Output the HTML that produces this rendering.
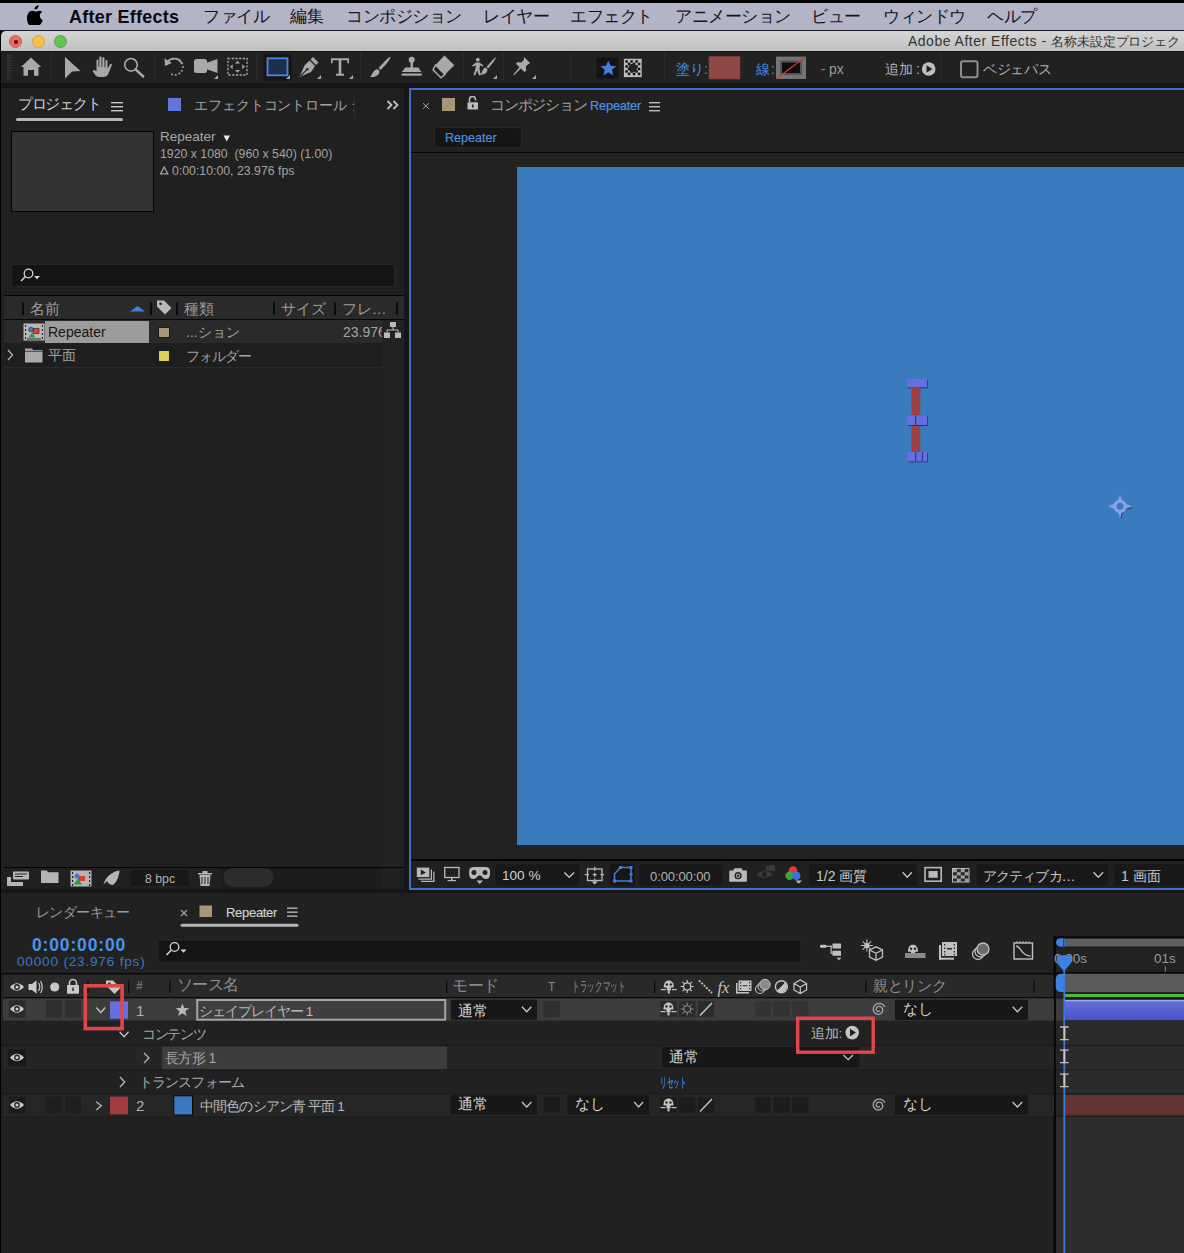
<!DOCTYPE html>
<html lang="ja"><head><meta charset="utf-8">
<style>
*{box-sizing:border-box;margin:0;padding:0}
html,body{width:1184px;height:1253px;overflow:hidden;background:#161616;font-family:"Liberation Sans",sans-serif;}
.a{position:absolute}
.t{position:absolute;white-space:nowrap;line-height:1}
#menubar{left:0;top:3px;width:1184px;height:27px;background:#b4b4c7;}
#titlebar{left:1px;top:31px;width:1183px;height:20px;background:linear-gradient(#d6d6d6,#c0c0c0);border-radius:5px 0 0 0}
#toolbar{left:1px;top:51px;width:1183px;height:32px;background:linear-gradient(#141414 0,#141414 1.2px,#212121 1.2px)}
.mi{top:5px;font-size:17px;letter-spacing:-0.5px;color:#15151f}
.panel{background:#202020}
</style></head><body>
<div class="a" style="left:0;top:0;width:1184px;height:3px;background:#000"></div>
<div class="a" style="left:0;top:0;width:1px;height:1253px;background:#000"></div>
<div id="menubar" class="a">
<svg class="a" style="left:27px;top:2px" width="17" height="20" viewBox="0 0 17 20"><path d="M11.6 0.2c.1 1.2-.4 2.3-1.1 3.1-.7.8-1.8 1.4-2.9 1.3-.1-1.1.4-2.300 1.1-3 .7-.8 1.9-1.400 2.900-1.400zM15.4 6.8c-1.600.9-2.700 2.400-2.600 4.300.1 2.200 1.500 3.400 2.900 4.100-.4 1.200-.9 2.200-1.600 3.200-.900 1.300-1.900 2.500-3.300 2.500-1.300 0-1.800-.8-3.300-.8-1.600 0-2.100.8-3.300.8-1.400 0-2.400-1.300-3.300-2.600C-.1 15.700-.700 10.900 1.400 8c1-1.400 2.600-2.200 4.100-2.200 1.400 0 2.300.8 3.400.8 1.100 0 1.800-.8 3.400-.8 1.300 0 2.700.700 3.500 1.800z" fill="#000"/></svg>
<span class="t" style="left:69px;top:5px;font-size:18px;letter-spacing:0.25px;font-weight:bold;color:#0a0a14">After Effects</span>
<span class="t mi" style="left:203px">ファイル</span>
<span class="t mi" style="left:290px">編集</span>
<span class="t mi" style="left:346px">コンポジション</span>
<span class="t mi" style="left:483px">レイヤー</span>
<span class="t mi" style="left:570px">エフェクト</span>
<span class="t mi" style="left:675px">アニメーション</span>
<span class="t mi" style="left:811px">ビュー</span>
<span class="t mi" style="left:883px">ウィンドウ</span>
<span class="t mi" style="left:987px">ヘルプ</span>
</div>
<div class="a" style="left:0;top:30px;width:1184px;height:1px;background:#1a1a22"></div>
<div id="titlebar" class="a">
<div class="a" style="left:8px;top:4px;width:13px;height:13px;border-radius:50%;background:#ee6a5e;border:0.5px solid #d5574c"><div class="a" style="left:4px;top:4px;width:4px;height:4px;border-radius:50%;background:#4a0c08"></div></div>
<div class="a" style="left:31px;top:4px;width:13px;height:13px;border-radius:50%;background:#f5bf4f;border:0.5px solid #d9a23c"></div>
<div class="a" style="left:53px;top:4px;width:13px;height:13px;border-radius:50%;background:#61c554;border:0.5px solid #4ea843"></div>
<span class="t" style="left:907px;top:3px;font-size:14px;letter-spacing:0.5px;color:#333">Adobe After Effects -</span><span class="t" style="left:1050px;top:4px;font-size:13.3px;letter-spacing:-0.1px;color:#333">名称未設定プロジェクト</span>
</div>
<div id="toolbar" class="a">
<svg class="a" style="left:0;top:0" width="1183" height="32" viewBox="1 51 1183 32">
<g fill="#3a3a3a"><rect x="7" y="55.0" width="4" height="1.2"/><rect x="7" y="57.5" width="4" height="1.2"/><rect x="7" y="60.0" width="4" height="1.2"/><rect x="7" y="62.5" width="4" height="1.2"/><rect x="7" y="65.0" width="4" height="1.2"/><rect x="7" y="67.5" width="4" height="1.2"/><rect x="7" y="70.0" width="4" height="1.2"/><rect x="7" y="72.5" width="4" height="1.2"/><rect x="7" y="75.0" width="4" height="1.2"/><rect x="7" y="77.5" width="4" height="1.2"/></g>
<g fill="#2c2c2c"><rect x="51" y="53" width="1" height="28"/><rect x="154" y="53" width="1" height="28"/><rect x="256" y="53" width="1" height="28"/><rect x="360" y="53" width="1" height="28"/><rect x="463" y="53" width="1" height="28"/><rect x="503" y="53" width="1" height="28"/><rect x="570" y="53" width="1" height="28"/><rect x="664" y="53" width="1" height="28"/><rect x="940" y="53" width="1" height="28"/></g>
<!-- home -->
<path d="M31 57.5 L41.2 67 L38.5 67 L38.5 75.7 L34 75.7 L34 70 L28 70 L28 75.7 L23.5 75.7 L23.5 67 L21 67 Z" fill="#a9a9a9"/>
<!-- arrow -->
<path d="M65 57 L80.5 71 L72 71.5 L65 78.5 Z" fill="#a9a9a9"/>
<!-- hand -->
<path d="M99.5 77 C96 77 94.5 74 93 71.5 L92.7 70.5 C93.5 69.5 95 70 96 71 L96.5 71.5 L96.5 60.5 C96.5 59 98.5 59 98.5 60.5 L98.5 67 L99.3 67 L99.3 57.5 C99.3 56 101.5 56 101.5 57.5 L101.5 67 L102.3 67 L102.3 58.2 C102.3 56.8 104.5 56.8 104.5 58.2 L104.5 67.5 L105.3 67.5 L105.5 61 C105.5 59.6 107.5 59.6 107.5 61 L107.5 69 L109.8 64.5 C110.5 63.3 112.2 63.6 111.8 65 L108.5 73.5 C107.5 76 105.5 77 103.5 77 Z" fill="#a9a9a9"/>
<!-- zoom -->
<circle cx="131" cy="64.8" r="6.3" fill="none" stroke="#a9a9a9" stroke-width="1.6"/>
<path d="M135.5 69.3 L143.3 76.5" stroke="#a9a9a9" stroke-width="2.4" stroke-linecap="round"/>
<!-- rotate -->
<path d="M166.8 64.5 A8.2 8.2 0 1 1 170 73.5" fill="none" stroke="#a9a9a9" stroke-width="1.8" stroke-dasharray="1.6 2.2"/>
<path d="M166.5 64 A8.2 8.2 0 0 1 181.5 63" fill="none" stroke="#a9a9a9" stroke-width="1.8"/>
<path d="M164.5 58.2 L165 66 L171.8 63 Z" fill="#a9a9a9"/>
<!-- camera -->
<rect x="194" y="59" width="13" height="14" rx="2.5" fill="#a9a9a9"/>
<path d="M206 63 L217.5 59 L217.5 73 L206 69 Z" fill="#a9a9a9"/>
<path d="M218 75 L218 79 L214 79 Z" fill="#a9a9a9"/>
<!-- pan behind -->
<rect x="228" y="58.5" width="19" height="16.5" fill="none" stroke="#a9a9a9" stroke-width="1.3" stroke-dasharray="2.2 1.5"/>
<path d="M237.5 60.8 L240 63.5 L235 63.5 Z M237.5 72.8 L240 70 L235 70 Z M230 66.8 L232.7 64.3 L232.7 69.3 Z M245 66.8 L242.3 64.3 L242.3 69.3 Z" fill="#a9a9a9"/>
<!-- rect tool selected -->
<rect x="263.5" y="54" width="28" height="26.5" rx="2.5" fill="#151515"/>
<rect x="267.5" y="58.3" width="20" height="17" fill="#1c2f4f" stroke="#4d86e0" stroke-width="1.8"/>
<path d="M290 75 L290 79 L286 79 Z" fill="#a9a9a9"/>
<!-- pen -->
<path d="M313 57 L318.5 62.5 L316 65 L310.5 59.5 Z" fill="#a9a9a9"/>
<path d="M309.5 60.5 L315 66 L311 72 L299.5 77 L304.5 65.5 Z" fill="#a9a9a9"/>
<path d="M300.5 76 L306.5 70 " stroke="#232323" stroke-width="1.1"/>
<circle cx="307.3" cy="69.2" r="1.3" fill="#232323"/>
<path d="M321 75 L321 79 L317 79 Z" fill="#a9a9a9"/>
<!-- T -->
<path d="M331 58.3 L349 58.3 L349 63.3 L347.3 63.3 L347.3 60.3 L341.3 60.3 L341.3 73.7 L344 73.7 L344 75.7 L336 75.7 L336 73.7 L338.7 73.7 L338.7 60.3 L332.7 60.3 L332.7 63.3 L331 63.3 Z" fill="#a9a9a9"/>
<path d="M353 75 L353 79 L349 79 Z" fill="#a9a9a9"/>
<!-- brush -->
<path d="M390.5 56.8 C390.5 59 386 65 380.5 70 L378.5 68 C383.5 62.5 389 56.8 390.5 56.8 Z" fill="#a9a9a9"/>
<path d="M377.5 69 L379.5 71 C379.5 75.5 375 77.5 370 77 C372.5 75.5 372 70.5 377.5 69 Z" fill="#a9a9a9"/>
<!-- stamp -->
<circle cx="411.7" cy="59.7" r="3" fill="#a9a9a9"/>
<rect x="410.5" y="61" width="2.4" height="7" fill="#a9a9a9"/>
<path d="M404 69.5 C404 68 405 67.5 407 67.5 L416.5 67.5 C418.5 67.5 419.5 68 419.5 69.5 L421.7 72 L401.6 72 Z" fill="#a9a9a9"/>
<rect x="401.6" y="73.5" width="20.1" height="2.2" fill="#a9a9a9"/>
<!-- eraser -->
<path d="M444.5 55.5 L454.3 65.3 L445 74.5 L435.5 65 Z" fill="#a9a9a9"/>
<path d="M435.5 65 L445 74.5 L441 77.7 L433 69.8 Z" fill="none" stroke="#a9a9a9" stroke-width="1.5"/>
<!-- roto brush -->
<circle cx="477.8" cy="59.7" r="1.9" fill="#a9a9a9"/>
<path d="M476 62.5 L479.5 62.5 L483.5 65.5 L482.8 66.5 L480 65.2 L479.5 69 L481 75 L479 75.5 L477.3 70.5 L475 75.5 L473.5 75 L475.5 68.5 L476 65.5 L472.5 66.5 L472 65.5 Z" fill="#a9a9a9"/>
<path d="M496 57 C495.5 59.5 492 64.5 488 68.5 L486.5 67 C490 63 494.5 57.5 496 57 Z" fill="#a9a9a9"/>
<path d="M485.5 67.5 L487.5 69.5 C487.5 73 484 75 480.5 74.5 C482.5 73 482 68.5 485.5 67.5 Z" fill="#a9a9a9"/>
<path d="M497 75 L497 79 L493 79 Z" fill="#a9a9a9"/>
<!-- puppet pin -->
<path d="M524 57 L530.3 63.3 L528.3 64 L525.8 66.8 L526.3 70.5 L524.5 72 L520.8 68.5 L514 75.3 L513.3 74.6 L519.5 67.3 L516 63.8 L517.5 62 L521.3 62.5 L523.8 60 Z" fill="#a9a9a9"/>
<path d="M536 75 L536 79 L532 79 Z" fill="#a9a9a9"/>
<!-- star button -->
<rect x="596" y="56.8" width="23" height="22.2" rx="2.5" fill="#141414" stroke="#262626" stroke-width="0.8"/>
<path d="M608.3 60.5 L610.5 65.8 L616.2 66.2 L611.8 69.8 L613.3 75.5 L608.3 72.3 L603.3 75.5 L604.8 69.8 L600.4 66.2 L606.1 65.8 Z" fill="#3f82e2"/>
<!-- checker -->
<rect x="623.9" y="58.8" width="17.8" height="18.3" fill="#bdbdbd"/><g fill="#111"><rect x="625.3" y="60.2" width="2.5" height="2.5"/><rect x="630.3" y="60.2" width="2.5" height="2.5"/><rect x="635.3" y="60.2" width="2.5" height="2.5"/><rect x="627.8" y="62.7" width="2.5" height="2.5"/><rect x="632.8" y="62.7" width="2.5" height="2.5"/><rect x="637.8" y="62.7" width="2.5" height="2.5"/><rect x="625.3" y="65.2" width="2.5" height="2.5"/><rect x="630.3" y="65.2" width="2.5" height="2.5"/><rect x="635.3" y="65.2" width="2.5" height="2.5"/><rect x="627.8" y="67.7" width="2.5" height="2.5"/><rect x="632.8" y="67.7" width="2.5" height="2.5"/><rect x="637.8" y="67.7" width="2.5" height="2.5"/><rect x="625.3" y="70.2" width="2.5" height="2.5"/><rect x="630.3" y="70.2" width="2.5" height="2.5"/><rect x="635.3" y="70.2" width="2.5" height="2.5"/><rect x="627.8" y="72.7" width="2.5" height="2.5"/><rect x="632.8" y="72.7" width="2.5" height="2.5"/><rect x="637.8" y="72.7" width="2.5" height="2.5"/></g><circle cx="632.8" cy="68" r="4.3" fill="#222"/>
<!-- fill swatch -->
<rect x="709" y="56.6" width="31" height="22.4" fill="#924747" stroke="#7a3c3c" stroke-width="0.8"/>
<!-- stroke swatch -->
<rect x="776" y="56.6" width="30" height="22.4" fill="#747474"/>
<rect x="780" y="60.5" width="22" height="14.5" fill="#555"/>
<rect x="782" y="62.5" width="18" height="10.5" fill="#0d0d0d" />
<path d="M776.5 78.8 L805.5 56.8" stroke="#d23a2e" stroke-width="1.2"/>
<!-- play circle -->
<circle cx="928.7" cy="69" r="6.8" fill="#c0c0c0"/>
<path d="M926.5 65.3 L932.5 69 L926.5 72.7 Z" fill="#232323"/>
<!-- checkbox -->
<rect x="961" y="61.3" width="16.5" height="16" rx="2" fill="none" stroke="#8e8e8e" stroke-width="2"/>
</svg>
<span class="t" style="left:675px;top:11px;font-size:14px;letter-spacing:-0.3px;color:#4a8ee0">塗り</span><span class="t" style="left:703px;top:11px;font-size:14px;color:#4a8ee0">:</span>
<span class="t" style="left:755px;top:11px;font-size:14px;color:#4a8ee0">線</span><span class="t" style="left:770px;top:11px;font-size:14px;color:#4a8ee0">:</span>
<span class="t" style="left:820px;top:11px;font-size:14px;color:#4a8ee0">-</span>
<span class="t" style="left:828px;top:11px;font-size:14px;color:#9a9a9a">px</span>
<span class="t" style="left:884px;top:11px;font-size:14px;letter-spacing:-0.3px;color:#b0b0b0">追加 :</span>
<span class="t" style="left:982px;top:11px;font-size:14px;letter-spacing:-0.3px;color:#b0b0b0">ベジェパス</span>
</div>
<!-- project panel -->
<div id="proj" class="a panel" style="left:1px;top:88px;width:403px;height:801px">
<div class="a" style="left:0;top:0;width:403px;height:801px;">
<span class="t" style="left:17px;top:9px;font-size:14.5px;letter-spacing:-1.3px;color:#cfcfcf">プロジェクト</span>
<svg class="a" style="left:110px;top:14px" width="12" height="10"><rect x="0" y="0" width="12" height="1.4" fill="#c8c8c8"/><rect x="0" y="4" width="12" height="1.4" fill="#c8c8c8"/><rect x="0" y="8" width="12" height="1.4" fill="#c8c8c8"/></svg>
<div class="a" style="left:15px;top:29.5px;width:107px;height:3px;border-radius:1.5px;background:#b5b5b5"></div>
<div class="a" style="left:167px;top:10px;width:13px;height:13px;background:#6175dc"></div>
<span class="t" style="left:193px;top:10px;font-size:14px;letter-spacing:-0.1px;color:#a3a3a3;width:161px;overflow:hidden">エフェクトコントロール シェイプ</span>
<div class="a" style="left:353px;top:5px;width:1px;height:25px;background:#2e2e2e"></div>
<svg class="a" style="left:385px;top:12px" width="15" height="10"><path d="M1.5 1 L5.5 5 L1.5 9 M7.5 1 L11.5 5 L7.5 9" fill="none" stroke="#c0c0c0" stroke-width="1.8"/></svg>
<div class="a" style="left:9.5px;top:42.5px;width:143px;height:81px;background:#333;border:1px solid #050505"></div>
<span class="t" style="left:159px;top:42px;font-size:13.5px;color:#a8a8a8">Repeater</span>
<svg class="a" style="left:222px;top:47px" width="8" height="7"><path d="M0.5 0.5 L7 0.5 L3.75 6.5 Z" fill="#e8e8e8"/></svg>
<span class="t" style="left:159px;top:60px;font-size:12.3px;color:#a3a3a3">1920 x 1080&nbsp; (960 x 540) (1.00)</span>
<svg class="a" style="left:159px;top:78px" width="9" height="9"><path d="M4.2 1 L7.8 7.8 L0.6 7.8 Z" fill="none" stroke="#a3a3a3" stroke-width="1.3"/></svg><span class="t" style="left:171px;top:77px;font-size:12.3px;color:#a3a3a3">0:00:10:00, 23.976 fps</span>
<!-- search -->
<div class="a" style="left:10px;top:176px;width:384px;height:22.5px;border-radius:3px;background:#141414;border:1px solid #262626"></div>
<svg class="a" style="left:18px;top:180px" width="24" height="14"><circle cx="9.5" cy="5.5" r="4.3" fill="none" stroke="#d6d6d6" stroke-width="1.3"/><path d="M6.5 8.5 L2 13" stroke="#d6d6d6" stroke-width="1.5"/><path d="M15 8 L21 8 L18 11.2 Z" fill="#d6d6d6"/></svg>
<!-- header -->
<div class="a" style="left:3px;top:207px;width:400px;height:1.5px;background:#050505"></div>
<div class="a" style="left:3px;top:208px;width:400px;height:23px;background:#2a2a2a"></div>
<div class="a" style="left:3px;top:231px;width:400px;height:1.5px;background:#050505"></div>
<g></g>
<div class="a" style="left:21px;top:214px;width:1.5px;height:13px;background:#0c0c0c"></div>
<div class="a" style="left:149px;top:214px;width:1.5px;height:13px;background:#0c0c0c"></div>
<div class="a" style="left:175px;top:214px;width:1.5px;height:13px;background:#0c0c0c"></div>
<div class="a" style="left:272px;top:214px;width:1.5px;height:13px;background:#0c0c0c"></div>
<div class="a" style="left:333px;top:214px;width:1.5px;height:13px;background:#0c0c0c"></div>
<div class="a" style="left:395px;top:214px;width:1.5px;height:13px;background:#0c0c0c"></div>
<span class="t" style="left:29px;top:213.5px;font-size:14.5px;color:#9c9c9c">名前</span>
<svg class="a" style="left:129px;top:218px" width="16" height="6"><path d="M0 5.5 L7.5 0 L15 5.5 Z" fill="#3d82e0"/></svg>
<svg class="a" style="left:155px;top:211px" width="17" height="17"><path d="M1 1.5 L8 1.5 L15.5 9 L9 15.5 L1 7.5 Z" fill="#b9b9b9"/><circle cx="4.6" cy="4.8" r="1.4" fill="#2a2a2a"/></svg>
<span class="t" style="left:183px;top:213.5px;font-size:14.5px;color:#9c9c9c">種類</span>
<span class="t" style="left:280px;top:213.5px;font-size:14.5px;color:#9c9c9c">サイズ</span>
<span class="t" style="left:341px;top:213.5px;font-size:14.5px;color:#9c9c9c">フレ…</span>
<!-- rows -->
<div class="a" style="left:3px;top:232px;width:378px;height:23px;background:#2a2a2a"></div>
<div class="a" style="left:3px;top:255px;width:378px;height:24px;background:#1e1e1e"></div>
<div class="a" style="left:3px;top:279px;width:378px;height:1px;background:#292929"></div>
<div class="a" style="left:381px;top:232px;width:22px;height:546px;background:#222"></div>
<svg class="a" style="left:22px;top:235px" width="22" height="18"><rect x="0.5" y="0.5" width="21" height="17" fill="#b8b8b8"/><g fill="#2a2a2a"><rect x="2" y="2" width="1.2" height="2"/><rect x="2" y="6" width="1.2" height="2"/><rect x="2" y="10" width="1.2" height="2"/><rect x="2" y="14" width="1.2" height="2"/><rect x="18.8" y="2" width="1.2" height="2"/><rect x="18.8" y="6" width="1.2" height="2"/><rect x="18.8" y="10" width="1.2" height="2"/><rect x="18.8" y="14" width="1.2" height="2"/><rect x="4" y="15.5" width="14" height="1"/></g><rect x="10" y="5.5" width="6" height="5" fill="#e03a30" stroke="#222" stroke-width="0.6"/><circle cx="8" cy="6.5" r="2.3" fill="#3a78e0" stroke="#222" stroke-width="0.6"/><path d="M5.5 14.5 L9 9.5 L12.5 14.5 Z" fill="#2e9a3a"/></svg>
<div class="a" style="left:44px;top:233px;width:104px;height:22px;background:#9c9c9c"></div>
<span class="t" style="left:47px;top:237px;font-size:14px;color:#161616">Repeater</span>
<div class="a" style="left:157px;top:238.5px;width:12px;height:11.5px;background:#a89776;border:1px solid #1a1a1a"></div>
<span class="t" style="left:185px;top:237px;font-size:14px;color:#a3a3a3">...ション</span>
<div class="a" style="left:341px;top:232px;width:40px;height:23px;overflow:hidden"><span class="t" style="left:1px;top:5px;font-size:14px;color:#a3a3a3">23.976</span></div>
<svg class="a" style="left:383px;top:234px" width="18" height="17"><rect x="6" y="0" width="6" height="5" fill="#b9b9b9"/><rect x="0" y="10.5" width="6" height="5.5" fill="#b9b9b9"/><rect x="11" y="10.5" width="6" height="5.5" fill="#b9b9b9"/><path d="M9 5 L9 8 M3 10.5 L3 8 L14 8 L14 10.5" fill="none" stroke="#b9b9b9" stroke-width="1"/></svg>
<svg class="a" style="left:6px;top:261px" width="7" height="12"><path d="M1 1 L5.5 6 L1 11" fill="none" stroke="#b5b5b5" stroke-width="1.3"/></svg>
<svg class="a" style="left:24px;top:260px" width="18" height="15"><path d="M0 0.5 L7 0.5 L8 2 L17.5 2 L17.5 14.5 L0 14.5 Z" fill="#a9a9a9"/><rect x="0" y="2.8" width="17.5" height="0.8" fill="#1e1e1e"/></svg>
<span class="t" style="left:47px;top:261px;font-size:13.5px;color:#a3a3a3">平面</span>
<div class="a" style="left:157px;top:262px;width:12px;height:11.5px;background:#e1d04f;border:1px solid #1a1a1a"></div>
<span class="t" style="left:185px;top:261px;font-size:14px;letter-spacing:-1px;color:#a3a3a3">フォルダー</span>
<!-- footer -->
<div class="a" style="left:3px;top:778.5px;width:400px;height:1.5px;background:#050505"></div>
<svg class="a" style="left:0;top:780px" width="403" height="21" viewBox="1 868 403 21">
<g fill="#b5b5b5">
<rect x="13" y="871.5" width="16" height="8" rx="1"/><rect x="7" y="877" width="4" height="9"/><rect x="11" y="882" width="12" height="4"/>
<path d="M41 870.5 L47 870.5 L48 872.3 L58.5 872.3 L58.5 883 L41 883 Z"/>
<rect x="70.5" y="870.5" width="21" height="16"/>
<path d="M119.5 870.5 C112 871.5 105.5 877 103.5 884.5 L107 881 C108 883.5 110.5 885 113 885 C117.5 881.5 119 876 119.5 870.5 Z"/>
<rect x="198" y="873" width="14" height="1.5"/><rect x="202.5" y="871" width="5" height="2"/>
<path d="M199.5 875 L210.5 875 L209.5 886 L200.5 886 Z"/>
</g>
<g fill="#222"><rect x="15" y="873.5" width="12" height="1"/><rect x="15" y="876" width="8" height="1"/><rect x="201.5" y="877" width="1" height="7"/><rect x="204.5" y="877" width="1" height="7"/><rect x="207.5" y="877" width="1" height="7"/>
<rect x="72" y="872" width="1.2" height="2"/><rect x="72" y="876" width="1.2" height="2"/><rect x="72" y="880" width="1.2" height="2"/><rect x="72" y="884" width="1.2" height="2"/><rect x="89" y="872" width="1.2" height="2"/><rect x="89" y="876" width="1.2" height="2"/><rect x="89" y="880" width="1.2" height="2"/><rect x="89" y="884" width="1.2" height="2"/>
</g>
<rect x="78" y="876" width="7" height="5" fill="#e03a30"/><circle cx="77" cy="876" r="2.5" fill="#3a78e0"/><path d="M74 884.5 L78 878.5 L82 884.5 Z" fill="#2e9a3a"/>
<rect x="130" y="869.5" width="59.5" height="17" rx="3" fill="#181818" stroke="#262626" stroke-width="0.8"/>
<rect x="221" y="868" width="160" height="21" fill="#1c1c1c"/><rect x="223.5" y="868" width="50" height="18.7" rx="9.3" fill="#2c2c2c"/>
</svg>
<span class="t" style="left:144px;top:785px;font-size:12.3px;color:#b0b0b0">8 bpc</span>
</div>
</div>
<!-- comp panel -->
<div id="comp" class="a" style="left:409px;top:88px;width:775px;height:802px;background:#202020;">
<div class="a" style="left:0;top:0;width:775px;height:1.8px;background:#3d6fc2"></div>
<div class="a" style="left:0;top:0;width:1.8px;height:802px;background:#3d6fc2"></div>
<div class="a" style="left:0;top:799.5px;width:775px;height:2px;background:#3d6fc2"></div>
<svg class="a" style="left:13px;top:14px" width="8" height="8"><path d="M1 1 L7 7 M7 1 L1 7" stroke="#9a9a9a" stroke-width="1"/></svg>
<div class="a" style="left:33px;top:10px;width:12.5px;height:12.5px;background:#a89776"></div>
<svg class="a" style="left:58px;top:8px" width="12" height="14"><path d="M2.5 6 L2.5 3.5 A3 3 0 0 1 8.5 3.5 L8.5 4.5" fill="none" stroke="#bcbcbc" stroke-width="1.6"/><rect x="0.5" y="6.2" width="10.5" height="7.3" rx="0.8" fill="#bcbcbc"/><rect x="5" y="8.5" width="1.6" height="3" fill="#222"/></svg>
<span class="t" style="left:81px;top:10px;font-size:14.5px;letter-spacing:-1.2px;color:#a3a3a3">コンポジション</span>
<span class="t" style="left:181px;top:12px;font-size:12.8px;letter-spacing:-0.2px;color:#4d90e2;-webkit-text-stroke:0.2px #4d90e2">Repeater</span>
<svg class="a" style="left:240px;top:14px" width="11" height="10"><rect x="0" y="0" width="11" height="1.4" fill="#bdbdbd"/><rect x="0" y="4" width="11" height="1.4" fill="#bdbdbd"/><rect x="0" y="8" width="11" height="1.4" fill="#bdbdbd"/></svg>
<div class="a" style="left:24.5px;top:38.5px;width:88.5px;height:21px;border-radius:3px;background:#151515;border:1px solid #272727"></div>
<span class="t" style="left:36px;top:43.5px;font-size:12.6px;color:#4d90e2;-webkit-text-stroke:0.15px #4d90e2">Repeater</span>
<div class="a" style="left:2px;top:64px;width:773px;height:1.3px;background:#050505"></div>
<div class="a" style="left:2px;top:65.3px;width:773px;height:706px;background:#222"></div>
<div class="a" style="left:108px;top:79px;width:667px;height:678px;background:#397bbd"></div>
<div class="a" style="left:2px;top:771px;width:773px;height:1.6px;background:#050505"></div>
</div>
<svg class="a" style="left:0;top:0" width="1184" height="1253">
<!-- shape -->
<rect x="907.8" y="380" width="20" height="8.3" fill="#1a2440" opacity="0.7"/>
<rect x="907" y="379" width="20" height="8.3" fill="#6470e0"/>
<rect x="911.4" y="387.3" width="8.8" height="28" fill="#a0403f"/>
<rect x="911.4" y="425" width="8.8" height="27" fill="#a0403f"/>
<rect x="907.8" y="416.5" width="20" height="9.5" fill="#1a2440" opacity="0.7"/>
<rect x="907" y="415.5" width="20" height="9.5" fill="#6470e0"/>
<rect x="915.2" y="415.5" width="1" height="9.5" fill="#2a2f70"/>
<rect x="907.8" y="453" width="20" height="9.3" fill="#1a2440" opacity="0.7"/>
<rect x="907" y="452.2" width="20" height="9.3" fill="#6470e0"/>
<rect x="915.2" y="452.2" width="1" height="9.3" fill="#2a2f70"/>
<rect x="921.8" y="452.2" width="1" height="9.3" fill="#2a2f70"/>
<!-- anchor -->
<g transform="translate(1120,506.3)">
<path d="M0 -12 L2.5 -4 L12 0 L2.5 4 L0 12 L-2.5 4 L-12 0 L-2.5 -4 Z" fill="#8fa0ea" opacity="0.9"/>
<path d="M1 12 L2.5 5 L4 3 L12 1.5" fill="none" stroke="#1a2440" stroke-width="1" opacity="0.7"/>
<circle r="5.3" fill="none" stroke="#9eaef0" stroke-width="2.4"/>
<circle r="5.3" fill="none" stroke="#5a6ad8" stroke-width="0.8" stroke-dasharray="1 1"/>
<circle r="3.5" fill="#397bbd"/>
</g>
</svg>
<svg class="a" style="left:0;top:0" width="1184" height="1253">
<!-- comp footer -->
<g fill="#b9b9b9">
<rect x="416.8" y="867.6" width="12.5" height="9.5"/>
<path d="M418.5 878.5 L430.8 878.5 L430.8 869.5 L432 869.5 L432 879.7 L418.5 879.7 Z"/>
<path d="M421 880.8 L433.3 880.8 L433.3 871.5 L434.5 871.5 L434.5 882 L421 882 Z"/>
</g>
<path d="M420.8 869.5 L426 872.4 L420.8 875.3 Z" fill="#222"/>
<rect x="444.7" y="867.5" width="14.3" height="10" fill="none" stroke="#b9b9b9" stroke-width="1.3"/>
<rect x="451" y="878" width="1.5" height="2" fill="#b9b9b9"/><rect x="447.5" y="880" width="8.5" height="1.2" fill="#b9b9b9"/>
<path d="M469.2 871 C469.2 868 471 867 474 867 L485 867 C488 867 490 868 490 871 L490 874 C490 877 488.5 879 486 879 C483.5 879 482 877 481 875.5 L478.2 875.5 C477.2 877 475.7 879 473.2 879 C470.7 879 469.2 877 469.2 874 Z" fill="#b9b9b9"/>
<circle cx="474" cy="872.5" r="2.5" fill="#222"/><circle cx="485" cy="872.5" r="2.5" fill="#222"/>
<path d="M476.5 880.5 L483 880.5 L479.75 884 Z" fill="#b9b9b9"/>
<rect x="494.5" y="863.7" width="86" height="22.3" rx="3" fill="#181818" stroke="#252525" stroke-width="1"/>
<path d="M564.4 872.5 L569.25 877.3 L574.1 872.5" fill="none" stroke="#c8c8c8" stroke-width="1.3"/>
<rect x="587.5" y="869" width="14.5" height="11.5" fill="none" stroke="#b9b9b9" stroke-width="1.3"/>
<path d="M594.7 866.7 L594.7 871 M594.7 878.5 L594.7 882.5 M584.8 874.7 L589 874.7 M600.5 874.7 L604 874.7 M592.7 874.7 L596.7 874.7 M594.7 872.7 L594.7 876.7" stroke="#b9b9b9" stroke-width="1.2"/>
<path d="M591.5 881.5 L597.8 881.5 L594.7 884.5 Z" fill="#b9b9b9"/>
<rect x="609.7" y="863.7" width="25.3" height="22.3" rx="3" fill="#161616"/>
<path d="M614.5 881 L614.5 874 L620.5 867.5 L631 867.5 L631 881 Z" fill="none" stroke="#3d82e0" stroke-width="1.5"/>
<g fill="#3d82e0"><rect x="613" y="879.5" width="3" height="3"/><rect x="629.5" y="879.5" width="3" height="3"/><rect x="629.5" y="866" width="3" height="3"/><rect x="619" y="866" width="3" height="3"/><rect x="629.5" y="873" width="3" height="2.5"/></g>
<rect x="638.1" y="863.4" width="84.8" height="22.9" rx="3" fill="#181818" stroke="#252525" stroke-width="1"/>
<path d="M729.3 870.5 L733 870.5 L734.5 868.2 L741.5 868.2 L743 870.5 L746.9 870.5 L746.9 881.7 L729.3 881.7 Z" fill="#b9b9b9"/>
<circle cx="738.1" cy="875.7" r="3.6" fill="#222"/><circle cx="738.1" cy="875.7" r="2.2" fill="#b9b9b9"/><circle cx="738.1" cy="875.7" r="1.3" fill="#222"/>
<path d="M756 874.5 Q764.5 867.5 773 874.5 Q764.5 881.5 756 874.5 Z" fill="#3a3a3a"/><circle cx="764.5" cy="874.5" r="2.5" fill="#222"/>
<path d="M766 866 L769 866 L770 865 L774 865 L775 866.5 L775 871 L766 871 Z" fill="#3a3a3a"/>
<circle cx="793" cy="870.5" r="4.2" fill="#e23b30"/><circle cx="789.6" cy="875.8" r="4.2" fill="#3aa83a"/><circle cx="796.3" cy="875.8" r="4.2" fill="#3b6fe8"/>
<path d="M795.5 880.5 L802 880.5 L798.75 883.7 Z" fill="#b9b9b9"/>
<rect x="808.4" y="863.4" width="109.5" height="22.9" rx="3" fill="#181818" stroke="#252525" stroke-width="1"/>
<path d="M902.7 872.2 L907.25 877.2 L911.8000000000001 872.2" fill="none" stroke="#c8c8c8" stroke-width="1.3"/>
<rect x="925" y="867.6" width="16.2" height="13.6" fill="none" stroke="#b9b9b9" stroke-width="1.6"/>
<rect x="928.5" y="871" width="9.2" height="6.8" fill="#b9b9b9"/>
<rect x="952.5" y="868.5" width="16.5" height="13.5" fill="#2a2a2a" stroke="#b9b9b9" stroke-width="1"/><g fill="#a0a0a0"><rect x="953.0" y="869.0" width="3.9" height="3.2"/><rect x="960.8" y="869.0" width="3.9" height="3.2"/><rect x="956.9" y="872.2" width="3.9" height="3.2"/><rect x="964.7" y="872.2" width="3.9" height="3.2"/><rect x="953.0" y="875.4" width="3.9" height="3.2"/><rect x="960.8" y="875.4" width="3.9" height="3.2"/><rect x="956.9" y="878.6" width="3.9" height="3.2"/><rect x="964.7" y="878.6" width="3.9" height="3.2"/></g>
<rect x="976" y="863.4" width="133" height="22.9" rx="3" fill="#181818" stroke="#252525" stroke-width="1"/>
<path d="M1093.5 872.2 L1098.3 877.2 L1103.1 872.2" fill="none" stroke="#c8c8c8" stroke-width="1.3"/>
<rect x="1113.7" y="863.4" width="80" height="22.9" rx="3" fill="#181818" stroke="#252525" stroke-width="1"/>
</svg>
<span class="t" style="left:502px;top:868.5px;font-size:13.6px;color:#d0d0d0">100 %</span>
<span class="t" style="left:650px;top:869.5px;font-size:13px;letter-spacing:-0.1px;color:#b0b0b0">0:00:00:00</span>
<span class="t" style="left:816px;top:868.5px;font-size:14px;color:#c8c8c8">1/2 画質</span>
<span class="t" style="left:983px;top:868.5px;font-size:14px;letter-spacing:-0.9px;color:#c8c8c8">アクティブカ…</span>
<span class="t" style="left:1121px;top:868.5px;font-size:14px;color:#c8c8c8">1 画面</span>
<!-- timeline -->
<div id="tl" class="a" style="left:1px;top:893px;width:1183px;height:360px;background:#212121">
<svg class="a" style="left:0;top:0" width="1183" height="360" viewBox="1 893 1183 360">
<!-- tabs -->
<path d="M181 910 L187 916 M187 910 L181 916" stroke="#a8a8a8" stroke-width="1.1"/>
<rect x="199.5" y="905.5" width="12.5" height="11.5" fill="#a89776"/>
<rect x="287" y="907.5" width="10.5" height="1.3" fill="#c0c0c0"/><rect x="287" y="911.5" width="10.5" height="1.3" fill="#c0c0c0"/><rect x="287" y="915.5" width="10.5" height="1.3" fill="#c0c0c0"/>
<rect x="180.5" y="923.8" width="118" height="3" rx="1.5" fill="#b5b5b5"/>
<!-- search -->
<rect x="158" y="940" width="643" height="22.3" rx="3" fill="#141414" stroke="#262626" stroke-width="1"/>
<circle cx="174.5" cy="947" r="4.3" fill="none" stroke="#d6d6d6" stroke-width="1.3"/><path d="M171.3 950 L166.5 955" stroke="#d6d6d6" stroke-width="1.5"/><path d="M180.5 949.5 L186.5 949.5 L183.5 952.7 Z" fill="#d6d6d6"/>
<!-- top right icons -->
<g fill="#c0c0c0" stroke="none">
<rect x="820" y="944.8" width="6.5" height="3" rx="1.2"/><rect x="826" y="945.7" width="6" height="1.2"/><rect x="830.5" y="945.7" width="1.2" height="8"/><rect x="831" y="952.7" width="2" height="1.2"/><rect x="832.5" y="943.5" width="8.5" height="5" rx="0.5"/><rect x="832.5" y="950.8" width="8.5" height="5" rx="0.5"/><path d="M836.5 957.8 L841.5 957.8 L839 960.3 Z"/></g>
<path d="M866.9 939.5 L866.9 951.5 M860.9 945.5 L872.9 945.5 M862.7 941.3 L871.1 949.7 M871.1 941.3 L862.7 949.7" stroke="#c0c0c0" stroke-width="1.1"/><circle cx="866.9" cy="945.5" r="2.6" fill="#c0c0c0"/>
<path d="M869.5 950 L876 946.8 L882.5 950 L882.5 957 L876 960.3 L869.5 957 Z M869.5 950 L876 953.3 L882.5 950 M876 953.3 L876 960.3" fill="#222" stroke="#c0c0c0" stroke-width="1.3"/>
<path d="M908 951.8 C908 946.8 910 944.8 913 944.8 C916 944.8 918 946.8 918 951.8 L915 951.8 L915 954.8 L911 954.8 L911 951.8 Z" fill="#c0c0c0"/><circle cx="911" cy="948.8" r="1.2" fill="#2a2a2a"/><circle cx="915" cy="948.8" r="1.2" fill="#2a2a2a"/><rect x="905" y="953.3" width="5" height="1.2" fill="#c0c0c0"/><rect x="916" y="953.3" width="5" height="1.2" fill="#c0c0c0"/><rect x="912" y="954.8" width="2" height="3" fill="#c0c0c0"/>
<rect x="905" y="953" width="20.5" height="5" fill="#8a8a8a"/>
<rect x="942" y="942" width="15" height="14" fill="#c0c0c0"/><rect x="939" y="945" width="2" height="14.7" fill="#c0c0c0"/><rect x="939" y="957.7" width="15" height="2" fill="#c0c0c0"/>
<g fill="#2a2a2a"><rect x="944" y="944" width="1.3" height="1.5"/><rect x="944" y="947.5" width="1.3" height="1.5"/><rect x="944" y="951" width="1.3" height="1.5"/><rect x="944" y="954" width="1.3" height="1.3"/><rect x="953.7" y="944" width="1.3" height="1.5"/><rect x="953.7" y="947.5" width="1.3" height="1.5"/><rect x="953.7" y="951" width="1.3" height="1.5"/><rect x="953.7" y="954" width="1.3" height="1.3"/><rect x="947" y="948" width="5" height="1.5"/></g>
<circle cx="978" cy="954" r="5.5" fill="none" stroke="#c0c0c0" stroke-width="1.3"/><circle cx="980.5" cy="951.5" r="5.5" fill="#222" stroke="#c0c0c0" stroke-width="1.3"/><circle cx="983" cy="949" r="6" fill="#6a6a6a" stroke="#c0c0c0" stroke-width="1.3"/>
<rect x="1014" y="943" width="18.5" height="16" fill="none" stroke="#c0c0c0" stroke-width="1.4"/>
<path d="M1016 946 C1021 946 1021 956 1030.5 956" fill="none" stroke="#c0c0c0" stroke-width="1.3"/>
<path d="M1017 941 L1017 943 M1020 941 L1020 943 M1023 941 L1023 943 M1026 941 L1026 943 M1029 941 L1029 943" stroke="#c0c0c0" stroke-width="0.9"/>
<!-- column header -->
<rect x="1" y="973" width="1053" height="1.6" fill="#060606"/>
<rect x="3" y="974.6" width="1051" height="22.4" fill="#292929"/>
<rect x="3" y="997" width="1051" height="1.4" fill="#0a0a0a"/>
<g fill="#0c0c0c"><rect x="87.3" y="980" width="1.3" height="13"/><rect x="128" y="980" width="1.3" height="13"/><rect x="169.3" y="980" width="1.3" height="13"/><rect x="446" y="980" width="1.3" height="13"/><rect x="654" y="980" width="1.3" height="13"/><rect x="865.3" y="980" width="1.3" height="13"/><rect x="1033.5" y="980" width="1.3" height="13"/></g>
<g transform="translate(0,1)"><path d="M10 986 Q17 978.5 24 986 Q17 993.5 10 986 Z" fill="#c8c8c8"/><circle cx="17" cy="986" r="2.9" fill="#222"/><circle cx="17" cy="986" r="1.6" fill="#c8c8c8"/>
<path d="M28.5 983 L32 983 L36.5 979.2 L36.5 992.8 L32 989 L28.5 989 Z" fill="#c8c8c8"/><path d="M38.5 982 Q41 986 38.5 990 M40.5 980 Q44 986 40.5 992" fill="none" stroke="#c8c8c8" stroke-width="1.2"/>
<circle cx="54.7" cy="986" r="4.6" fill="#c8c8c8"/>
<path d="M69.5 984 L69.5 982 A3.5 3.5 0 0 1 76.5 982 L76.5 984" fill="none" stroke="#c8c8c8" stroke-width="1.6"/><rect x="67" y="984" width="12" height="8.7" rx="0.8" fill="#c8c8c8"/><rect x="72.3" y="986.5" width="1.5" height="3.5" fill="#292929"/>
<path d="M106 979.5 L113 979.5 L120.5 987 L114.5 993 L106 984.5 Z" fill="#c4c4c4"/><circle cx="109.3" cy="982.7" r="1.3" fill="#292929"/></g>
<g transform="translate(0,0)">
<path d="M663.8 987.5 C663.8 982.5 665.8 980.5 668.8 980.5 C671.8 980.5 673.8 982.5 673.8 987.5 L670.8 987.5 L670.8 990.5 L666.8 990.5 L666.8 987.5 Z" fill="#c4c4c4"/><circle cx="666.8" cy="984.5" r="1.2" fill="#2a2a2a"/><circle cx="670.8" cy="984.5" r="1.2" fill="#2a2a2a"/><rect x="660.8" y="989.0" width="5" height="1.2" fill="#c4c4c4"/><rect x="671.8" y="989.0" width="5" height="1.2" fill="#c4c4c4"/><rect x="667.8" y="990.5" width="2" height="3" fill="#c4c4c4"/>
<path d="M687.2 980 L687.2 993 M680.7 986.5 L693.7 986.5 M682.5 981.8 L691.9 991.2 M691.9 981.8 L682.5 991.2" stroke="#c4c4c4" stroke-width="1.2"/><circle cx="687.2" cy="986.5" r="3.6" fill="#292929" stroke="#c4c4c4" stroke-width="1.3"/>
<path d="M699 980.5 L712 993" stroke="#c4c4c4" stroke-width="1.8" stroke-dasharray="2 1.3"/>
</g>
<text x="717.5" y="992.5" font-family="Liberation Serif" font-style="italic" font-size="16.5" fill="#c4c4c4">fx</text>
<rect x="738.5" y="980.5" width="13" height="10.5" fill="#c4c4c4"/><rect x="736" y="983" width="1.5" height="10.5" fill="#c4c4c4"/><rect x="736" y="992" width="13" height="1.5" fill="#c4c4c4"/>
<g fill="#292929"><rect x="740" y="982" width="1.2" height="1.3"/><rect x="740" y="985" width="1.2" height="1.3"/><rect x="740" y="988" width="1.2" height="1.3"/><rect x="749" y="982" width="1.2" height="1.3"/><rect x="749" y="985" width="1.2" height="1.3"/><rect x="749" y="988" width="1.2" height="1.3"/><rect x="742.5" y="985.3" width="5" height="1"/></g>
<circle cx="760" cy="989" r="4.5" fill="none" stroke="#c4c4c4" stroke-width="1.1"/><circle cx="762.5" cy="986.5" r="4.5" fill="#292929" stroke="#c4c4c4" stroke-width="1.1"/><circle cx="765" cy="984.5" r="5.2" fill="#8a8a8a" stroke="#c4c4c4" stroke-width="1"/>
<circle cx="781.4" cy="986.8" r="6" fill="none" stroke="#c4c4c4" stroke-width="1.4"/><path d="M785.6 982.6 A6 6 0 0 1 777.2 991 Z" fill="#c4c4c4"/><path d="M785.6 982.6 L777.2 991" stroke="#c4c4c4" stroke-width="1"/>
<path d="M794 983.5 L800.3 980 L806.6 983.5 L806.6 990 L800.3 993.5 L794 990 Z M794 983.5 L800.3 987 L806.6 983.5 M800.3 987 L800.3 993.5" fill="none" stroke="#c4c4c4" stroke-width="1.2"/>
<!-- timeline area -->
<rect x="1053.6" y="936" width="2.2" height="317" fill="#060606"/>
<rect x="1056" y="936" width="128" height="11.5" fill="#0c0c0c"/>
<rect x="1064" y="938.6" width="120" height="8" fill="#5f5f5f"/>
<path d="M1064.7 938.3 L1060 938.3 A4.6 4.3 0 0 0 1060 946.8 L1064.7 946.8 Z" fill="#3d82e0"/>
<rect x="1063" y="938" width="1.2" height="9" fill="#2a4a80"/>
<rect x="1056" y="947.5" width="128" height="25" fill="#222"/>
<rect x="1164.8" y="966.5" width="1" height="5" fill="#8a8a8a"/>
<rect x="1056" y="972" width="128" height="2" fill="#080808"/>
<rect x="1056" y="974" width="128" height="20" fill="#222"/>
<rect x="1064" y="973.7" width="120" height="18.3" fill="#5b5b5b"/>
<path d="M1064.7 973.7 L1061 973.7 A5.5 5.5 0 0 0 1055.7 979 L1055.7 987 A5 5 0 0 0 1061 992 L1064.7 992 Z" fill="#3d82e0"/>
<rect x="1064" y="994" width="120" height="3.2" fill="#4cbb3c"/>
<rect x="1056" y="997.3" width="128" height="1.3" fill="#111"/>
<!-- rows bg -->
<rect x="3" y="998.4" width="1051" height="22.4" fill="#3c3c3c"/>
<rect x="3" y="1020.8" width="1051" height="24.4" fill="#212121"/>
<rect x="3" y="1045" width="1051" height="1" fill="#1a1a1a"/>
<rect x="3" y="1046" width="1051" height="23.5" fill="#252525"/>
<rect x="3" y="1069.5" width="1051" height="1" fill="#1a1a1a"/>
<rect x="3" y="1070.5" width="1051" height="23" fill="#212121"/>
<rect x="3" y="1093.5" width="1051" height="1" fill="#1a1a1a"/>
<rect x="3" y="1094.5" width="1051" height="22" fill="#262626"/>
<rect x="3" y="1116.5" width="1051" height="1" fill="#1c1c1c"/>
<!-- right timeline rows -->
<rect x="1056" y="998.5" width="128" height="255" fill="#2d2d2d"/>
<rect x="1056" y="998.5" width="8" height="22.3" fill="#3c3c3c"/>
<rect x="1056" y="1020.8" width="8" height="96" fill="#262626"/>
<defs><linearGradient id="lb" x1="0" y1="0" x2="0" y2="1"><stop offset="0" stop-color="#6772d4"/><stop offset="1" stop-color="#4752c0"/></linearGradient>
<filter id="nz" x="0" y="0" width="1" height="1"><feTurbulence type="fractalNoise" baseFrequency="0.9" numOctaves="2" seed="3"/><feColorMatrix type="matrix" values="0 0 0 0 0.5  0 0 0 0 0.5  0 0 0 0 0.8  0 0 0 0.35 0"/><feComposite in2="SourceGraphic" operator="in"/><feBlend in2="SourceGraphic" mode="overlay"/></filter></defs>
<rect x="1064" y="998.5" width="120" height="1.4" fill="#151515"/>
<rect x="1064" y="999.9" width="120" height="20.6" fill="url(#lb)" filter="url(#nz)"/>
<rect x="1064" y="999.9" width="120" height="1.4" fill="#a2aae6"/>
<rect x="1064" y="1020.5" width="120" height="1" fill="#1a1a1a"/>
<rect x="1064" y="1020.5" width="120" height="24.5" fill="#2b2b2b"/>
<rect x="1056" y="1045" width="128" height="1" fill="#1b1b1b"/>
<rect x="1064" y="1046" width="120" height="23.5" fill="#2b2b2b"/>
<rect x="1056" y="1069.5" width="128" height="1" fill="#1b1b1b"/>
<rect x="1064" y="1070.5" width="120" height="23" fill="#2b2b2b"/>
<rect x="1056" y="1093.5" width="128" height="1" fill="#1b1b1b"/>
<rect x="1064" y="1095" width="120" height="20.8" fill="#643535"/>
<rect x="1064" y="1114.5" width="120" height="1.3" fill="#552c2c"/>
<rect x="1056" y="1115.8" width="128" height="1.2" fill="#1c1c1c"/>

<!-- row 1 -->
<rect x="9" y="1000.4" width="16.3" height="17.2" fill="#2b2b2b"/>
<path d="M10 1009 Q17 1001.5 24 1009 Q17 1016.5 10 1009 Z" fill="#c8c8c8"/><circle cx="17" cy="1009" r="2.9" fill="#222"/><circle cx="17" cy="1009" r="1.6" fill="#c8c8c8"/>
<rect x="46.2" y="1000.4" width="15.6" height="17.2" fill="#2e2e2e"/>
<rect x="65.3" y="1000.4" width="15.7" height="17.2" fill="#2e2e2e"/>
<path d="M96.3 1007.5 L100.8 1012.5 L105.3 1007.5" fill="none" stroke="#c4c4c4" stroke-width="1.3"/>
<rect x="110" y="1001.4" width="18" height="17.3" fill="#6470e0"/>
<path d="M182.4 1003.4 L184.2 1008 L189.2 1008.2 L185.3 1011.3 L186.6 1016 L182.4 1013.2 L178.2 1016 L179.5 1011.3 L175.6 1008.2 L180.6 1008 Z" fill="#b8b8b8"/>
<rect x="197.2" y="1000" width="248" height="19.7" fill="#3f3f3f" stroke="#a5a5a5" stroke-width="2"/>
<rect x="450.8" y="999.7" width="86.2" height="20.1" rx="1.5" fill="#171717"/>
<path d="M522 1006.8 L526.7 1011.8 L531.4 1006.8" fill="none" stroke="#c4c4c4" stroke-width="1.3"/>
<rect x="543.7" y="1001.2" width="16.2" height="15.6" fill="#2f2f2f"/>
<rect x="660.2" y="1001.2" width="16.8" height="15.6" fill="#2b2b2b"/>
<rect x="678.8" y="1001.2" width="16.7" height="15.6" fill="#2b2b2b"/>
<rect x="698" y="1001.2" width="16.1" height="15.6" fill="#2b2b2b"/>
<path d="M663.5 1009.5 C663.5 1004.5 665.5 1002.5 668.5 1002.5 C671.5 1002.5 673.5 1004.5 673.5 1009.5 L670.5 1009.5 L670.5 1012.5 L666.5 1012.5 L666.5 1009.5 Z" fill="#c4c4c4"/><circle cx="666.5" cy="1006.5" r="1.2" fill="#2a2a2a"/><circle cx="670.5" cy="1006.5" r="1.2" fill="#2a2a2a"/><rect x="660.5" y="1011.0" width="5" height="1.2" fill="#c4c4c4"/><rect x="671.5" y="1011.0" width="5" height="1.2" fill="#c4c4c4"/><rect x="667.5" y="1012.5" width="2" height="3" fill="#c4c4c4"/>
<path d="M687.2 1002.5 L687.2 1015.5 M680.7 1009 L693.7 1009 M682.5 1004.3 L691.9 1013.7 M691.9 1004.3 L682.5 1013.7" stroke="#8a8a8a" stroke-width="1"/><circle cx="687.2" cy="1009" r="3.3" fill="#2b2b2b" stroke="#8a8a8a" stroke-width="1.1"/>
<path d="M700 1015.5 L712 1003" stroke="#c4c4c4" stroke-width="1.5"/>
<rect x="755" y="1001.2" width="15.8" height="15.6" fill="#333"/>
<rect x="773.6" y="1001.2" width="16.2" height="15.6" fill="#333"/>
<rect x="792.2" y="1001.2" width="16.2" height="15.6" fill="#333"/>
<path d="M879.66 1010.53 L879.52 1010.77 L879.32 1010.99 L879.07 1011.17 L878.77 1011.30 L878.43 1011.37 L878.08 1011.37 L877.71 1011.30 L877.35 1011.15 L877.01 1010.92 L876.71 1010.62 L876.47 1010.25 L876.30 1009.82 L876.21 1009.36 L876.22 1008.87 L876.32 1008.37 L876.52 1007.89 L876.83 1007.44 L877.22 1007.05 L877.70 1006.73 L878.25 1006.51 L878.84 1006.39 L879.47 1006.39 L880.09 1006.51 L880.70 1006.75 L881.27 1007.12 L881.77 1007.60 L882.17 1008.18 L882.46 1008.84 L882.63 1009.57 L882.65 1010.32 L882.53 1011.09 L882.25 1011.83 L881.83 1012.52 L881.28 1013.13 L880.60 1013.64 L879.83 1014.01 L878.98 1014.23 L878.09 1014.29 L877.19 1014.18 L876.31 1013.89 L875.49 1013.43 L874.75 1012.81 L874.14 1012.05 L873.67 1011.17 L873.38 1010.21 L873.27 1009.19 L873.36 1008.15 L873.65 1007.12 L874.14 1006.16 L874.81 1005.30 L875.64 1004.57 L876.62 1004.00 L877.70 1003.62 L878.85 1003.44 L880.02 1003.50 L881.19 1003.77 L882.29 1004.27 L883.29 1004.98 L884.16 1005.88 L884.84 1006.94" fill="none" stroke="#a8a8a8" stroke-width="1.3" transform="rotate(0)"/>
<rect x="894.9" y="999.7" width="133.1" height="20.2" rx="1.5" fill="#171717"/>
<path d="M1012.6 1006.8 L1017.4 1011.8 L1022.2 1006.8" fill="none" stroke="#c4c4c4" stroke-width="1.3"/>
<!-- row 2 -->
<path d="M119.6 1031.8 L124.1 1036.8 L128.6 1031.8" fill="none" stroke="#c4c4c4" stroke-width="1.3"/>

<circle cx="852.2" cy="1032.6" r="6.8" fill="#c4c4c4"/><path d="M850 1028.8 L856 1032.6 L850 1036.4 Z" fill="#222"/>
<!-- row 3 -->
<rect x="8.1" y="1049" width="17.9" height="17.3" fill="#1a1a1a"/>
<path d="M10 1057.5 Q17 1050.0 24 1057.5 Q17 1065.0 10 1057.5 Z" fill="#c8c8c8"/><circle cx="17" cy="1057.5" r="2.9" fill="#222"/><circle cx="17" cy="1057.5" r="1.6" fill="#c8c8c8"/>
<path d="M144 1053 L149 1058.0 L144 1063" fill="none" stroke="#b8b8b8" stroke-width="1.3"/>
<rect x="162.2" y="1046.6" width="284.8" height="22.4" fill="#3d3d3d"/>
<rect x="661.5" y="1046.2" width="198.5" height="21.9" rx="1.5" fill="#171717" stroke="#2a2a2a" stroke-width="1"/>
<path d="M843.3 1055 L848.15 1059.6 L853.0 1055" fill="none" stroke="#c4c4c4" stroke-width="1.3"/>
<!-- row 4 -->
<path d="M120 1077 L124.7 1082.0 L120 1087" fill="none" stroke="#b8b8b8" stroke-width="1.3"/>
<!-- row 5 -->
<rect x="9" y="1096.7" width="16.3" height="16.8" fill="#1b1b1b"/>
<path d="M10 1105 Q17 1097.5 24 1105 Q17 1112.5 10 1105 Z" fill="#c8c8c8"/><circle cx="17" cy="1105" r="2.9" fill="#222"/><circle cx="17" cy="1105" r="1.6" fill="#c8c8c8"/>
<rect x="46.2" y="1096.7" width="15.6" height="16.8" fill="#1e1e1e"/>
<rect x="65.3" y="1096.7" width="15.7" height="16.8" fill="#1e1e1e"/>
<path d="M96.3 1101.8 L101.3 1105.85 L96.3 1109.8999999999999" fill="none" stroke="#b8b8b8" stroke-width="1.3"/>
<rect x="110" y="1096.7" width="18" height="17.6" fill="#a03c3c"/>
<rect x="173.8" y="1095.8" width="18.8" height="19.2" fill="#3a78c0" stroke="#050505" stroke-width="1"/>
<rect x="450.8" y="1095" width="86.2" height="19.6" rx="1.5" fill="#171717"/>
<path d="M522 1102 L526.7 1107 L531.4 1102" fill="none" stroke="#c4c4c4" stroke-width="1.3"/>
<rect x="543.7" y="1096.7" width="16.2" height="15.6" fill="#1c1c1c"/>
<rect x="567.3" y="1095" width="81.8" height="19.6" rx="1.5" fill="#171717"/>
<path d="M634.2 1102 L638.6 1107 L643.0 1102" fill="none" stroke="#c4c4c4" stroke-width="1.3"/>
<rect x="660.2" y="1097.3" width="16.8" height="15.5" fill="#1c1c1c"/>
<rect x="678.8" y="1097.3" width="16.7" height="15.5" fill="#1c1c1c"/>
<rect x="698" y="1097.3" width="16.1" height="15.5" fill="#1c1c1c"/>
<path d="M663.5 1105.5 C663.5 1100.5 665.5 1098.5 668.5 1098.5 C671.5 1098.5 673.5 1100.5 673.5 1105.5 L670.5 1105.5 L670.5 1108.5 L666.5 1108.5 L666.5 1105.5 Z" fill="#c4c4c4"/><circle cx="666.5" cy="1102.5" r="1.2" fill="#2a2a2a"/><circle cx="670.5" cy="1102.5" r="1.2" fill="#2a2a2a"/><rect x="660.5" y="1107.0" width="5" height="1.2" fill="#c4c4c4"/><rect x="671.5" y="1107.0" width="5" height="1.2" fill="#c4c4c4"/><rect x="667.5" y="1108.5" width="2" height="3" fill="#c4c4c4"/>
<path d="M700 1111.5 L712 1099" stroke="#c4c4c4" stroke-width="1.5"/>
<rect x="755" y="1097.3" width="15.8" height="15.5" fill="#1c1c1c"/>
<rect x="773.6" y="1097.3" width="16.2" height="15.5" fill="#1c1c1c"/>
<rect x="792.2" y="1097.3" width="16.2" height="15.5" fill="#1c1c1c"/>
<path d="M879.66 1106.23 L879.52 1106.47 L879.32 1106.69 L879.07 1106.87 L878.77 1107.00 L878.43 1107.07 L878.08 1107.07 L877.71 1107.00 L877.35 1106.85 L877.01 1106.62 L876.71 1106.32 L876.47 1105.95 L876.30 1105.52 L876.21 1105.06 L876.22 1104.57 L876.32 1104.07 L876.52 1103.59 L876.83 1103.14 L877.22 1102.75 L877.70 1102.43 L878.25 1102.21 L878.84 1102.09 L879.47 1102.09 L880.09 1102.21 L880.70 1102.45 L881.27 1102.82 L881.77 1103.30 L882.17 1103.88 L882.46 1104.54 L882.63 1105.27 L882.65 1106.02 L882.53 1106.79 L882.25 1107.53 L881.83 1108.22 L881.28 1108.83 L880.60 1109.34 L879.83 1109.71 L878.98 1109.93 L878.09 1109.99 L877.19 1109.88 L876.31 1109.59 L875.49 1109.13 L874.75 1108.51 L874.14 1107.75 L873.67 1106.87 L873.38 1105.91 L873.27 1104.89 L873.36 1103.85 L873.65 1102.82 L874.14 1101.86 L874.81 1101.00 L875.64 1100.27 L876.62 1099.70 L877.70 1099.32 L878.85 1099.14 L880.02 1099.20 L881.19 1099.47 L882.29 1099.97 L883.29 1100.68 L884.16 1101.58 L884.84 1102.64" fill="none" stroke="#a8a8a8" stroke-width="1.3"/>
<rect x="894.9" y="1095" width="133.1" height="19.6" rx="1.5" fill="#171717"/>
<path d="M1012.6 1102 L1017.4 1107 L1022.2 1102" fill="none" stroke="#c4c4c4" stroke-width="1.3"/>
<!-- red box 1 -->
<rect x="85.3" y="985.8" width="36.8" height="42.8" fill="none" stroke="#e0464a" stroke-width="3.6"/>
<rect x="797.7" y="1018.2" width="75.5" height="34" fill="none" stroke="#e0464a" stroke-width="3.4"/>
</svg>
<span class="t" style="left:35px;top:12px;font-size:14px;letter-spacing:-0.6px;color:#9a9a9a">レンダーキュー</span>
<span class="t" style="left:225px;top:13px;font-size:13px;letter-spacing:-0.3px;color:#d2d2d2;-webkit-text-stroke:0.15px #d2d2d2">Repeater</span>
<span class="t" style="left:31px;top:44px;font-size:17.5px;font-weight:bold;letter-spacing:0.85px;color:#4a95ec">0:00:00:00</span>
<span class="t" style="left:16px;top:62px;font-size:13.6px;letter-spacing:0.8px;color:#3a78c4">00000 (23.976 fps)</span>
<span class="t" style="left:176px;top:84px;font-size:15.5px;letter-spacing:-0.6px;color:#8e8e8e">ソース名</span>
<span class="t" style="left:135px;top:87px;font-size:12px;color:#8e8e8e">#</span>
<span class="t" style="left:451px;top:85px;font-size:15.5px;letter-spacing:-0.3px;color:#8a8a8a">モード</span>
<span class="t" style="left:547px;top:88px;font-size:12px;color:#8a8a8a">T</span>
<span class="t" style="left:571px;top:86px;font-size:14px;color:#8e8e8e;transform:scaleX(0.545);transform-origin:left">トラックマット</span>
<span class="t" style="left:872px;top:86px;font-size:14.5px;letter-spacing:-0.3px;color:#8e8e8e">親とリンク</span>
<span class="t" style="left:135px;top:110px;font-size:15px;color:#b0b0b0">1</span>
<span class="t" style="left:198px;top:112px;font-size:13.5px;letter-spacing:-1px;color:#b8b8b8">シェイプレイヤー 1</span>
<span class="t" style="left:457px;top:110.5px;font-size:14.5px;color:#d0d0d0">通常</span>
<span class="t" style="left:902px;top:109px;font-size:14.5px;color:#d0d0d0">なし</span>
<span class="t" style="left:141px;top:134px;font-size:14px;letter-spacing:-1.3px;color:#a8a8a8">コンテンツ</span>
<span class="t" style="left:810px;top:134px;font-size:13.5px;letter-spacing:-0.3px;color:#b5b5b5">追加:</span>
<span class="t" style="left:164px;top:158px;font-size:14px;letter-spacing:-0.6px;color:#a8a8a8">長方形 1</span>
<span class="t" style="left:668px;top:157px;font-size:14.5px;color:#d0d0d0">通常</span>
<span class="t" style="left:137.5px;top:182px;font-size:14px;letter-spacing:-0.8px;color:#a8a8a8">トランスフォーム</span>
<span class="t" style="left:659px;top:183px;font-size:13px;color:#3b83dc;-webkit-text-stroke:0.4px #3b83dc;transform:scaleX(0.5);transform-origin:left">リセット</span>
<span class="t" style="left:135px;top:205px;font-size:15px;color:#b0b0b0">2</span>
<span class="t" style="left:199px;top:207px;font-size:13.5px;letter-spacing:-0.85px;color:#b8b8b8">中間色のシアン青 平面 1</span>
<span class="t" style="left:457px;top:204px;font-size:14.5px;color:#d0d0d0">通常</span>
<span class="t" style="left:574px;top:204px;font-size:14.5px;color:#d0d0d0">なし</span>
<span class="t" style="left:902px;top:204px;font-size:14.5px;color:#d0d0d0">なし</span>
<span class="t" style="left:1053px;top:59px;font-size:13.5px;color:#9a9a9a">0:00s</span>
<span class="t" style="left:1153px;top:59px;font-size:13.5px;color:#9a9a9a">01s</span>
</div>
<svg class="a" style="left:0;top:0" width="1184" height="1253"><!-- playhead -->
<rect x="1063.4" y="955" width="1.8" height="298" fill="#3a7ad8"/>
<path d="M1056.8 955.3 L1071.1 955.3 L1071.1 963 L1064 971.3 L1056.8 963 Z" fill="#3d82e0"/>
<path d="M1060 1027.0 L1068.7 1027.0 M1060 1039.6000000000001 L1068.7 1039.6000000000001" stroke="#bdbdbd" stroke-width="1.3"/><rect x="1063.4" y="1026.4" width="2" height="13.8" fill="#c4c4c4"/><path d="M1060 1050.1 L1068.7 1050.1 M1060 1062.7 L1068.7 1062.7" stroke="#bdbdbd" stroke-width="1.3"/><rect x="1063.4" y="1049.5" width="2" height="13.8" fill="#c4c4c4"/><path d="M1060 1074.1 L1068.7 1074.1 M1060 1086.7 L1068.7 1086.7" stroke="#bdbdbd" stroke-width="1.3"/><rect x="1063.4" y="1073.5" width="2" height="13.8" fill="#c4c4c4"/>
</svg>
</body></html>
